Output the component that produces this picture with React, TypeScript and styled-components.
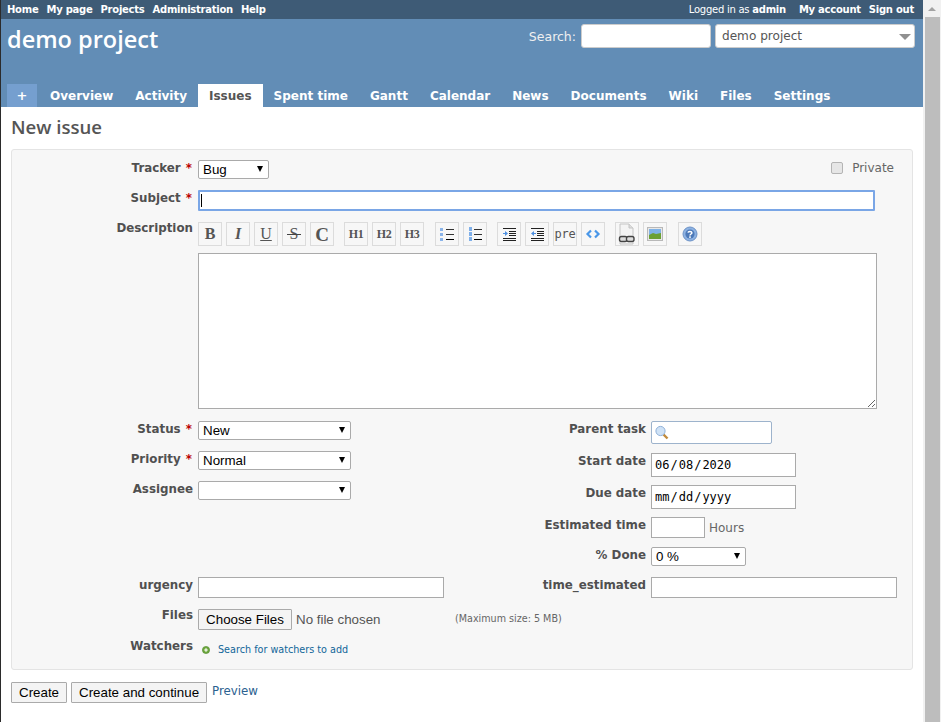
import React from "react";
import styled, { createGlobalStyle } from "styled-components";

const GlobalStyle = createGlobalStyle`
  html, body {
    margin: 0;
    padding: 0;
    height: 722px;
    overflow: hidden;
    background: #fff;
  }
  * { box-sizing: border-box; }
`;

const verdana = `"DejaVu Sans", Verdana, sans-serif`;
const arial = `"Liberation Sans", Arial, sans-serif`;
const trebuchet = `"Open Sans", "DejaVu Sans", sans-serif`;

const Page = styled.div`
  display: flex;
  width: 941px;
  height: 722px;
  overflow: hidden;
`;

const Main = styled.div`
  width: 923px;
  border-left: 1px solid #2b2b2b;
  background: #fff;
  font-family: ${verdana};
`;

const ScrollTrack = styled.div`
  width: 18px;
  background: #f1f1f1;
  display: flex;
  flex-direction: column;
  align-items: center;
`;

const ScrollArrow = styled.div`
  height: 17px;
  display: flex;
  align-items: center;
  &::before {
    content: "";
    border-left: 4px solid transparent;
    border-right: 4px solid transparent;
    border-bottom: 4px solid #a3a3a3;
  }
`;

const ScrollThumb = styled.div`
  flex: 1;
  width: 15px;
  background: #bdbdbd;
`;

const TopMenu = styled.div`
  height: 19px;
  background: #3e5b76;
  display: flex;
  justify-content: space-between;
  align-items: center;
  padding: 0 9px 0 6px;
  font-size: 10px;
  letter-spacing: -0.25px;
  color: #fff;
`;

const MenuGroup = styled.div`
  display: flex;
  gap: 8px;
  align-items: center;
`;

const MenuLink = styled.a`
  font-weight: bold;
  color: #fff;
`;

const LoggedAs = styled.span`
  margin-right: 5px;
  font-weight: normal;
  b { font-weight: bold; }
`;

const Header = styled.div`
  height: 88px;
  background: #628db6;
  display: flex;
  flex-direction: column;
  padding-top: 5px;
`;

const HeaderTop = styled.div`
  display: flex;
  justify-content: space-between;
  align-items: flex-start;
  padding: 0 8px 0 6px;
`;

const Title = styled.h1`
  margin: 0;
  font-family: ${trebuchet};
  font-size: 23.5px;
  line-height: 30px;
  font-weight: 600;
  color: #fff;
`;

const QuickSearch = styled.div`
  display: flex;
  align-items: center;
  height: 24px;
  color: #f0f0f0;
  font-size: 12.5px;
`;

const SearchLabel = styled.label`
  margin-right: 5px;
`;

const SearchInput = styled.input`
  width: 130px;
  height: 24px;
  border: 1px solid #ccc;
  border-radius: 3px;
  background: #fff;
  margin-right: 4px;
`;

const ProjectJump = styled.div`
  position: relative;
  width: 200px;
  height: 24px;
  border: 1px solid #ccc;
  border-radius: 3px;
  background: #fff;
  color: #555;
  font-size: 12.1px;
  line-height: 22px;
  padding-left: 6px;
  &::after {
    content: "";
    position: absolute;
    right: 3px;
    top: 9px;
    border-left: 6px solid transparent;
    border-right: 6px solid transparent;
    border-top: 6px solid #909090;
  }
`;

const Tabs = styled.div`
  margin-top: auto;
  display: flex;
  padding-left: 6px;
  height: 23px;
`;

const NewTab = styled.a`
  width: 30px;
  margin-right: 2px;
  background: #759fcf;
  color: #fff;
  font-weight: bold;
  font-size: 13px;
  line-height: 23px;
  text-align: center;
`;

const Tab = styled.a<{ $active?: boolean }>`
  padding: 1px 11px 0;
  font-size: 12px;
  font-weight: bold;
  line-height: 23px;
  height: 23px;
  color: ${(p) => (p.$active ? "#555" : "#fff")};
  background: ${(p) => (p.$active ? "#fff" : "transparent")};
`;

const Content = styled.div`
  padding: 9px 10px 0 10px;
`;

const Heading = styled.h2`
  margin: 0 0 11px;
  font-family: ${trebuchet};
  font-size: 18.6px;
  line-height: 22px;
  font-weight: 600;
  color: #555;
`;

const Box = styled.div`
  position: relative;
  width: 902px;
  height: 521px;
  border: 1px solid #e4e4e4;
  border-radius: 3px;
  background: #f7f7f7;
  padding-top: 10px;
`;

const Field = styled.div<{ $after?: number; $labelWidth?: number }>`
  display: grid;
  grid-template-columns: ${(p) => p.$labelWidth ?? 181}px 1fr;
  column-gap: 5px;
  margin-bottom: ${(p) => p.$after ?? 0}px;
  align-items: start;
`;

const Label = styled.label<{ $lift?: number }>`
  text-align: right;
  font-size: 11.85px;
  font-weight: bold;
  line-height: 15px;
  color: #505050;
  white-space: nowrap;
  margin-top: ${(p) => 1 - (p.$lift ?? 0)}px;
`;

const Required = styled.span`
  color: #bb0000;
  margin-left: 1px;
  padding-right: 1px;
`;

const SelectWrap = styled.div<{ $width: number }>`
  position: relative;
  width: ${(p) => p.$width}px;
  height: 19px;
  &::after {
    content: "";
    position: absolute;
    right: 6px;
    top: 6px;
    border-left: 3.5px solid transparent;
    border-right: 3.5px solid transparent;
    border-top: 6px solid #000;
    pointer-events: none;
  }
`;

const Select = styled.select`
  appearance: none;
  display: block;
  width: 100%;
  height: 100%;
  border: 1px solid #aaa;
  border-radius: 2px;
  background: #fff;
  font-family: ${arial};
  font-size: 13.33px;
  color: #000;
  padding: 0 0 0 4px;
  outline: none;
`;

const TextInput = styled.input<{ $width: number; $height?: number }>`
  display: block;
  width: ${(p) => p.$width}px;
  height: ${(p) => p.$height ?? 21}px;
  border: 1px solid #aaa;
  background: #fff;
  outline: none;
  padding: 0 4px;
`;

const FocusWrap = styled.div`
  position: relative;
  width: 677px;
  height: 21px;
  &::after {
    content: "";
    position: absolute;
    left: 3px;
    top: 4px;
    width: 1px;
    height: 13px;
    background: #000;
  }
`;

const SubjectInput = styled.input`
  display: block;
  width: 100%;
  height: 100%;
  border: 2px solid #7aa6e6;
  border-radius: 1px;
  background: #fff;
  outline: none;
`;

const PrivateLabel = styled.label`
  position: absolute;
  right: 18px;
  top: 11px;
  display: flex;
  align-items: center;
  gap: 9px;
  font-size: 12px;
  color: #666;
`;

const Checkbox = styled.input`
  appearance: none;
  width: 12px;
  height: 12px;
  margin: 0;
  border: 1px solid #b4b4b4;
  border-radius: 2px;
  background: #e6e6e6;
`;

const Toolbar = styled.div`
  display: flex;
  margin-bottom: 7px;
`;

const ToolButton = styled.button<{ $space?: number }>`
  width: 24px;
  height: 24px;
  margin-right: ${(p) => 4 + (p.$space ?? 0)}px;
  padding: 0;
  border: 1px solid #dcdcdc;
  background: #f7f7f7;
  color: #555;
  display: flex;
  align-items: center;
  justify-content: center;
  font-family: "Liberation Serif", serif;
  font-size: 16px;
  font-weight: bold;
  line-height: 1;
`;

const LightGlyph = styled.span`
  font-weight: normal;
`;

const StrikeGlyph = styled.span`
  position: relative;
  font-weight: normal;
  &::after {
    content: "";
    position: absolute;
    left: -3px;
    right: -3px;
    top: 8px;
    height: 1px;
    background: #444;
  }
`;

const BigGlyph = styled.span`
  font-size: 19px;
`;

const SmallHeading = styled.span`
  font-size: 12px;
  letter-spacing: -0.5px;
`;

const PreText = styled.span`
  font-family: "DejaVu Sans Mono", monospace;
  font-size: 12px;
  font-weight: normal;
  letter-spacing: -0.3px;
  color: #555;
`;

const Editor = styled.textarea`
  display: block;
  width: 679px;
  height: 156px;
  border: 1px solid #aaa;
  background: #fff;
  outline: none;
  margin-bottom: 12px;
`;

const Split = styled.div`
  display: grid;
  grid-template-columns: 432px 1fr;
  margin-bottom: 11px;
`;

const ParentWrap = styled.div`
  position: relative;
  width: 121px;
  height: 23px;
  svg {
    position: absolute;
    left: 4px;
    top: 4px;
  }
`;

const ParentInput = styled.input`
  display: block;
  width: 100%;
  height: 100%;
  border: 1px solid #9db3cc;
  border-radius: 2px;
  background: #fff;
  outline: none;
`;

const DateInput = styled.input`
  display: block;
  width: 145px;
  height: 24px;
  border: 1px solid #aaa;
  border-radius: 0;
  background: #fff;
  outline: none;
  padding: 0 0 0 2px;
  font-family: "DejaVu Sans Mono", monospace;
  font-size: 12px;
  color: #000;
  &::-webkit-calendar-picker-indicator {
    display: none;
  }
`;

const Inline = styled.div`
  display: flex;
  align-items: center;
  gap: 4px;
`;

const Unit = styled.span`
  font-size: 12px;
  color: #666;
`;

const FileRow = styled.div`
  display: flex;
  align-items: center;
`;

const FileInput = styled.input`
  width: 256px;
  font-family: ${arial};
  font-size: 13.33px;
  color: #555;
  &::file-selector-button {
    width: 94px;
    height: 21px;
    margin-right: 4px;
    border: 1px solid #aaa;
    border-radius: 1px;
    background: #f4f4f4;
    color: #000;
    font-family: ${arial};
    font-size: 13.33px;
    padding: 0;
  }
`;

const Hint = styled.span`
  margin: -2px 0 0 1px;
  font-size: 9.6px;
  color: #666;
`;

const WatcherLink = styled.a`
  display: flex;
  align-items: center;
  gap: 8px;
  margin: 4px 0 0 4px;
  font-size: 9.65px;
  color: #169;
`;

const Actions = styled.div`
  display: flex;
  align-items: center;
  gap: 4px;
  margin-top: 12px;
`;

const PushButton = styled.button`
  height: 21px;
  border: 1px solid #aaa;
  border-radius: 1px;
  background: #f4f4f4;
  color: #000;
  font-family: ${arial};
  font-size: 13.33px;
  padding: 0 7px;
`;

const PreviewLink = styled.a`
  margin: -4px 0 0 1px;
  font-size: 11.8px;
  color: #2a6190;
`;

const ListIcon = ({ numbered }: { numbered?: boolean }) => (
  <svg width="16" height="16" viewBox="0 0 16 16">
    {[3, 8, 13].map((y, i) => (
      <g key={y}>
        {numbered ? (
          <rect x="2" y={y - 2} width="3" height="4" fill="#7fb0ea" />
        ) : (
          <rect x="1" y={y - 1} width="3" height="3" fill="#8ab4ea" />
        )}
        <rect x="7" y={y} width="8" height="1" fill={i === 2 ? "#000" : "#333"} />
      </g>
    ))}
  </svg>
);

const IndentIcon = ({ out }: { out?: boolean }) => (
  <svg width="16" height="16" viewBox="0 0 16 16">
    <rect x="2" y="2" width="13" height="1" fill="#222" />
    <rect x="8" y="5" width="7" height="1" fill="#222" />
    <rect x="8" y="7" width="7" height="1" fill="#222" />
    <rect x="8" y="9" width="7" height="1" fill="#222" />
    <rect x="2" y="12" width="13" height="1" fill="#222" />
    <rect x="2" y="14" width="13" height="1" fill="#222" />
    {out ? (
      <path d="M2 7.5 5 5v2h2v1H5v2z" fill="#4d8fe0" />
    ) : (
      <path d="M7 7.5 4 5v2H2v1h2v2z" fill="#4d8fe0" />
    )}
  </svg>
);

const CodeIcon = () => (
  <svg width="16" height="16" viewBox="0 0 16 16">
    <path d="M6 4.5 2.5 8 6 11.5M10 4.5 13.5 8 10 11.5" fill="none" stroke="#4a97e8" strokeWidth="2.2" />
  </svg>
);

const LinkIcon = () => (
  <svg width="20" height="22" viewBox="0 0 20 22">
    <path d="M3 1h9l4 4v16H3z" fill="#f4f4f4" stroke="#c4c4c4" />
    <path d="M12 1v4h4" fill="#ddd" stroke="#c4c4c4" />
    <rect x="2.5" y="13.5" width="7.5" height="5" rx="2" fill="#ddd" stroke="#444" strokeWidth="1.4" />
    <rect x="9.5" y="13.5" width="7.5" height="5" rx="2" fill="#ddd" stroke="#444" strokeWidth="1.4" />
  </svg>
);

const ImageIcon = () => (
  <svg width="16" height="16" viewBox="0 0 16 16">
    <rect x="0.5" y="1.5" width="15" height="13" fill="#e8e8e8" stroke="#b8b8b8" />
    <rect x="2" y="3" width="12" height="10" fill="#7fb2e6" />
    <path d="M2 9l4-2 3 1 5-1v6H2z" fill="#6ba032" />
  </svg>
);

const HelpIcon = () => (
  <svg width="16" height="16" viewBox="0 0 16 16">
    <circle cx="8" cy="8" r="7" fill="#8db2e2" stroke="#6d92c6" />
    <circle cx="8" cy="8" r="4.6" fill="#4c79b8" />
    <path d="M6 6.6C6.2 5 9.8 5 9.9 6.8 10 8 8 8 8 9.4" fill="none" stroke="#fff" strokeWidth="1.5" />
    <rect x="7.2" y="10.3" width="1.6" height="1.6" fill="#fff" />
  </svg>
);

const MagnifierIcon = () => (
  <svg width="14" height="15" viewBox="0 0 14 15">
    <path d="M8.5 9.5 12.5 13.5" stroke="#c08a3c" strokeWidth="2.4" />
    <circle cx="5.5" cy="6" r="4.6" fill="#cfe2f6" stroke="#8fb0d8" />
  </svg>
);

const AddIcon = () => (
  <svg width="8" height="8" viewBox="0 0 8 8">
    <circle cx="4" cy="4" r="3.6" fill="#6fa83f" stroke="#4e8a2a" strokeWidth="0.6" />
    <path d="M2.2 4h3.6M4 2.2v3.6" stroke="#fff" strokeWidth="1.2" />
  </svg>
);

const navItems = ["Overview", "Activity", "Issues", "Spent time", "Gantt", "Calendar", "News", "Documents", "Wiki", "Files", "Settings"];

const StyledSelect = ({ width, value }: { width: number; value: string }) => (
  <SelectWrap $width={width}>
    <Select defaultValue={value}>
      <option>{value}</option>
    </Select>
  </SelectWrap>
);

export default function App() {
  return (
    <Page>
      <GlobalStyle />
      <Main>
        <TopMenu>
          <MenuGroup>
            <MenuLink>Home</MenuLink>
            <MenuLink>My page</MenuLink>
            <MenuLink>Projects</MenuLink>
            <MenuLink>Administration</MenuLink>
            <MenuLink>Help</MenuLink>
          </MenuGroup>
          <MenuGroup>
            <LoggedAs>
              Logged in as <b>admin</b>
            </LoggedAs>
            <MenuLink>My account</MenuLink>
            <MenuLink>Sign out</MenuLink>
          </MenuGroup>
        </TopMenu>
        <Header>
          <HeaderTop>
            <Title>demo project</Title>
            <QuickSearch>
              <SearchLabel>Search:</SearchLabel>
              <SearchInput />
              <ProjectJump>demo project</ProjectJump>
            </QuickSearch>
          </HeaderTop>
          <Tabs>
            <NewTab>+</NewTab>
            {navItems.map((item) => (
              <Tab key={item} $active={item === "Issues"}>
                {item}
              </Tab>
            ))}
          </Tabs>
        </Header>
        <Content>
          <Heading>New issue</Heading>
          <Box>
            <PrivateLabel>
              <Checkbox type="checkbox" />
              Private
            </PrivateLabel>
            <Field $after={11}>
              <Label>
                Tracker <Required>*</Required>
              </Label>
              <StyledSelect width={71} value="Bug" />
            </Field>
            <Field $after={11}>
              <Label>
                Subject <Required>*</Required>
              </Label>
              <FocusWrap>
                <SubjectInput />
              </FocusWrap>
            </Field>
            <Field>
              <Label $lift={2}>Description</Label>
              <div>
                <Toolbar>
                  <ToolButton>B</ToolButton>
                  <ToolButton><i>I</i></ToolButton>
                  <ToolButton><LightGlyph><u>U</u></LightGlyph></ToolButton>
                  <ToolButton><StrikeGlyph>S</StrikeGlyph></ToolButton>
                  <ToolButton $space={6}><BigGlyph>C</BigGlyph></ToolButton>
                  <ToolButton><SmallHeading>H1</SmallHeading></ToolButton>
                  <ToolButton><SmallHeading>H2</SmallHeading></ToolButton>
                  <ToolButton $space={7}><SmallHeading>H3</SmallHeading></ToolButton>
                  <ToolButton><ListIcon /></ToolButton>
                  <ToolButton $space={6}><ListIcon numbered /></ToolButton>
                  <ToolButton><IndentIcon /></ToolButton>
                  <ToolButton><IndentIcon out /></ToolButton>
                  <ToolButton><PreText>pre</PreText></ToolButton>
                  <ToolButton $space={6}><CodeIcon /></ToolButton>
                  <ToolButton><LinkIcon /></ToolButton>
                  <ToolButton $space={7}><ImageIcon /></ToolButton>
                  <ToolButton><HelpIcon /></ToolButton>
                </Toolbar>
                <Editor />
              </div>
            </Field>
            <Split>
              <div>
                <Field $after={11}>
                  <Label>
                    Status <Required>*</Required>
                  </Label>
                  <StyledSelect width={153} value="New" />
                </Field>
                <Field $after={11}>
                  <Label>
                    Priority <Required>*</Required>
                  </Label>
                  <StyledSelect width={153} value="Normal" />
                </Field>
                <Field>
                  <Label>Assignee</Label>
                  <StyledSelect width={153} value="" />
                </Field>
              </div>
              <div>
                <Field $labelWidth={202} $after={9}>
                  <Label>Parent task</Label>
                  <ParentWrap>
                    <ParentInput />
                    <MagnifierIcon />
                  </ParentWrap>
                </Field>
                <Field $labelWidth={202} $after={8}>
                  <Label>Start date</Label>
                  <DateInput type="date" defaultValue="2020-06-08" />
                </Field>
                <Field $labelWidth={202} $after={8}>
                  <Label>Due date</Label>
                  <DateInput type="date" />
                </Field>
                <Field $labelWidth={202} $after={9}>
                  <Label>Estimated time</Label>
                  <Inline>
                    <TextInput $width={54} />
                    <Unit>Hours</Unit>
                  </Inline>
                </Field>
                <Field $labelWidth={202}>
                  <Label>% Done</Label>
                  <StyledSelect width={95} value="0 %" />
                </Field>
              </div>
            </Split>
            <Split>
              <Field>
                <Label>urgency</Label>
                <TextInput $width={246} />
              </Field>
              <Field $labelWidth={202}>
                <Label>time_estimated</Label>
                <TextInput $width={246} />
              </Field>
            </Split>
            <Field $after={10}>
              <Label $lift={2}>Files</Label>
              <FileRow>
                <FileInput type="file" multiple />
                <Hint>(Maximum size: 5 MB)</Hint>
              </FileRow>
            </Field>
            <Field>
              <Label $lift={2}>Watchers</Label>
              <WatcherLink>
                <AddIcon />
                Search for watchers to add
              </WatcherLink>
            </Field>
          </Box>
          <Actions>
            <PushButton>Create</PushButton>
            <PushButton>Create and continue</PushButton>
            <PreviewLink>Preview</PreviewLink>
          </Actions>
        </Content>
      </Main>
      <ScrollTrack>
        <ScrollArrow />
        <ScrollThumb />
      </ScrollTrack>
    </Page>
  );
}
